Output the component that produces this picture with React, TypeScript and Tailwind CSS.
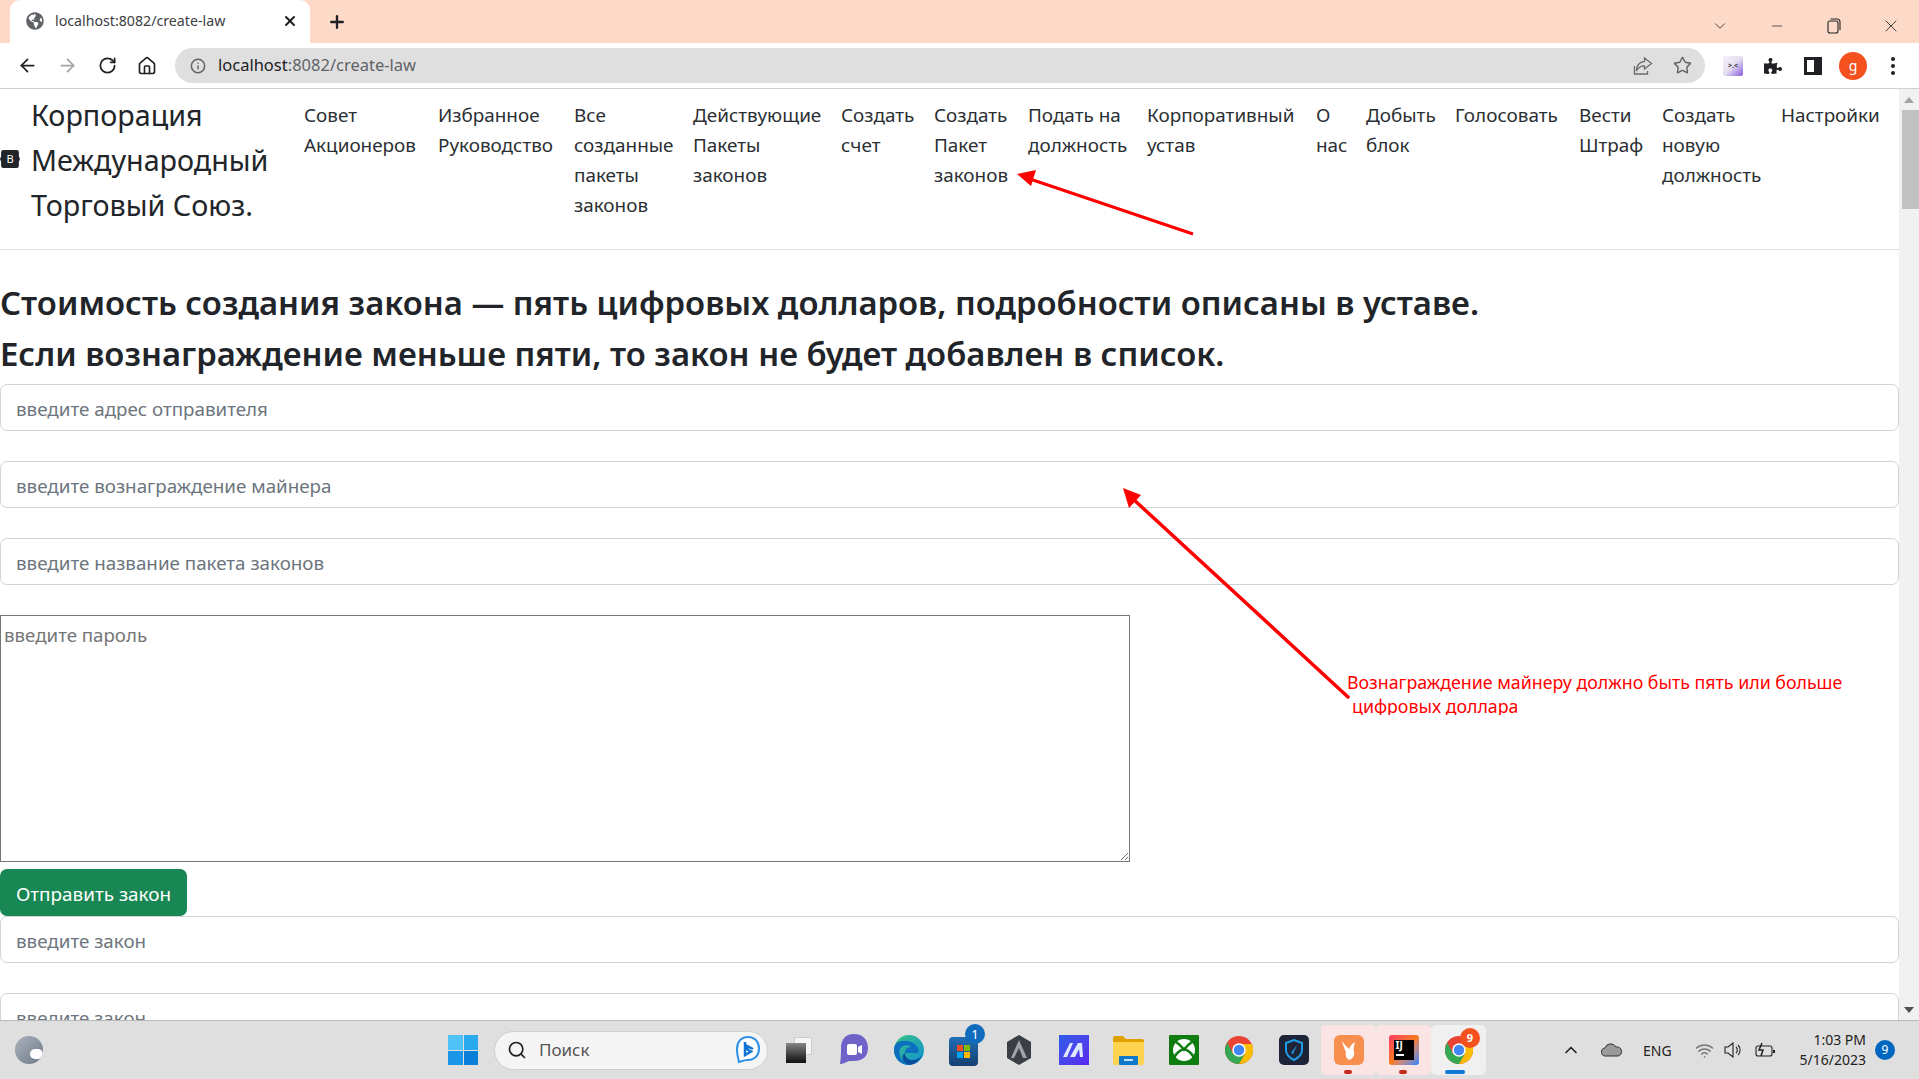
import React from "react";
import { ArrowLeft, ArrowRight, RotateCw, Home, Star, X, Plus, Minus, ChevronDown, ChevronUp, Search, Info, Wifi } from "lucide-react";
import { FaGlobeAmericas, FaPuzzlePiece } from "react-icons/fa";

const navItems: { w: string; lines: string[] }[] = [
  { w: "w-[134px]", lines: ["Совет", "Акционеров"] },
  { w: "w-[136px]", lines: ["Избранное", "Руководство"] },
  { w: "w-[119px]", lines: ["Все", "созданные", "пакеты", "законов"] },
  { w: "w-[148px]", lines: ["Действующие", "Пакеты", "законов"] },
  { w: "w-[93px]", lines: ["Создать", "счет"] },
  { w: "w-[94px]", lines: ["Создать", "Пакет", "законов"] },
  { w: "w-[119px]", lines: ["Подать на", "должность"] },
  { w: "w-[169px]", lines: ["Корпоративный", "устав"] },
  { w: "w-[50px]", lines: ["О", "нас"] },
  { w: "w-[89px]", lines: ["Добыть", "блок"] },
  { w: "w-[124px]", lines: ["Голосовать"] },
  { w: "w-[83px]", lines: ["Вести", "Штраф"] },
  { w: "w-[119px]", lines: ["Создать", "новую", "должность"] },
  { w: "w-[118px]", lines: ["Настройки"] },
];

function Slot({ children, w = "w-[40px]" }: { children: React.ReactNode; w?: string }) {
  return <div className={`${w} h-full flex items-center justify-center shrink-0`}>{children}</div>;
}

function TextInput({ placeholder, className = "" }: { placeholder: string; className?: string }) {
  return (
    <input
      placeholder={placeholder}
      className={`block w-full h-[47px] shrink-0 rounded-[7px] border border-[#ced4da] px-[15px] pt-[3px] text-[18.8px] bg-white placeholder:text-[#6c757d] outline-none ${className}`}
    />
  );
}

function Chrome({ size = 32 }: { size?: number }) {
  return (
    <svg width={size} height={size} viewBox="0 0 32 32">
      <circle cx="16" cy="16" r="15" fill="#ea4335" />
      <path d="M1 16 A15 15 0 0 0 16 31 L22.5 20 L9.5 20 L3.5 8 A15 15 0 0 0 1 16Z" fill="#34a853" />
      <path d="M16 9.5 L29.6 9.5 A15 15 0 0 1 16 31 L22.5 20 Z" fill="#fbbc04" />
      <circle cx="16" cy="16" r="7.2" fill="#fff" />
      <circle cx="16" cy="16" r="5.6" fill="#4285f4" />
    </svg>
  );
}

function TaskIcon({ children, bg = "" }: { children: React.ReactNode; bg?: string }) {
  return <div className={`w-[55px] h-[50px] shrink-0 flex items-center justify-center relative rounded-[5px] ${bg}`}>{children}</div>;
}

export default function App() {
  return (
    <div className="w-[1919px] h-[1079px] overflow-hidden flex flex-col bg-white relative font-['Noto_Sans',sans-serif] text-[#212529]">
      {/* Tab strip */}
      <div className="h-[43px] shrink-0 bg-[#fcdac7] flex items-end">
        <div className="ml-[10px] w-[300px] h-[43px] bg-white rounded-t-[10px] flex items-center pb-[1px] shrink-0">
          <FaGlobeAmericas className="ml-[16px] text-[#5f6368]" size={18} />
          <span className="ml-[11px] w-[227px] text-[14.2px] leading-none text-[#3c4043] whitespace-nowrap">localhost:8082/create-law</span>
          <X size={16} strokeWidth={3} className="text-[#202124]" />
        </div>
        <div className="h-[43px] flex items-center ml-[17px]">
          <Plus size={20} strokeWidth={2.8} className="text-[#202124]" />
        </div>
        <div className="flex-1" />
        <div className="h-[43px] flex items-start pt-[8px] text-[#333]">
          <Slot w="w-[57px] h-[20px]"><ChevronDown size={18} strokeWidth={1.2} /></Slot>
          <Slot w="w-[57px] h-[20px]"><Minus size={16} strokeWidth={1.2} /></Slot>
          <Slot w="w-[57px] h-[20px]">
            <svg width="14" height="16" viewBox="0 0 14 16" fill="none" stroke="#222" strokeWidth="1.1"><rect x="1" y="3" width="10" height="12" rx="2" /><path d="M3.5 1h6.5a3 3 0 0 1 3 3v8" /></svg>
          </Slot>
          <Slot w="w-[57px] h-[20px]"><X size={20} strokeWidth={1.1} /></Slot>
        </div>
      </div>

      {/* Toolbar */}
      <div className="h-[46px] shrink-0 bg-white border-b border-[#d0d0d0] flex items-center pl-[7px] pr-[6px]">
        <Slot><ArrowLeft size={21} strokeWidth={2} className="text-[#202124]" /></Slot>
        <Slot><ArrowRight size={21} strokeWidth={2} className="text-[#a5a5a5]" /></Slot>
        <Slot><RotateCw size={19} strokeWidth={2.2} className="text-[#202124]" /></Slot>
        <Slot><Home size={20} strokeWidth={2} className="text-[#202124]" /></Slot>
        <div className="ml-[8px] flex-1 h-[35px] rounded-full bg-[#dfdfdf] flex items-center">
          <Info size={16} strokeWidth={2.2} className="ml-[15px] text-[#5f6368]" />
          <span className="ml-[12px] text-[16.5px] leading-none whitespace-nowrap text-[#5f6368]"><span className="text-[#202124]">localhost</span>:8082/create-law</span>
          <div className="flex-1" />
          <svg width="20" height="20" viewBox="0 0 20 20" fill="none" stroke="#6b6b6b" strokeWidth="1.3" className="mr-[20px]"><path d="M1.5 10v8h13v-3" /><path d="M11.5 2l7 5.5-7 5.5V9.8C7.5 9.8 5 11.5 3.5 15c0-6 3.5-9 8-9.6z" /></svg>
          <Star size={19} strokeWidth={1.8} className="text-[#5f6368] mr-[13px]" />
        </div>
        <div className="w-[8px] shrink-0" />
        <Slot>
          <div className="w-[20px] h-[20px] rounded-[2px] bg-gradient-to-br from-[#f4f0f8] via-[#e6def2] to-[#8a55d8] flex items-center justify-center text-[7px] leading-none text-[#222] font-bold">{">.<"}</div>
        </Slot>
        <Slot><FaPuzzlePiece size={18} className="text-[#202124]" /></Slot>
        <Slot>
          <div className="w-[18px] h-[18px] border-[3px] border-r-[8px] border-[#202124]" />
        </Slot>
        <Slot>
          <div className="w-[28px] h-[28px] rounded-full bg-[#f4511e] text-white text-[14px] flex items-center justify-center">g</div>
        </Slot>
        <Slot>
          <div className="flex flex-col gap-[3px]">
            <div className="w-[4px] h-[4px] rounded-full bg-[#202124]" />
            <div className="w-[4px] h-[4px] rounded-full bg-[#202124]" />
            <div className="w-[4px] h-[4px] rounded-full bg-[#202124]" />
          </div>
        </Slot>
      </div>

      {/* Page */}
      <div className="flex-1 min-h-0 flex overflow-hidden relative">
        <div className="flex-1 min-w-0 overflow-hidden flex flex-col">
          <nav className="h-[161px] shrink-0 border-b border-[#dfdfdf] flex items-start">
            <svg width="20" height="18" viewBox="0 0 18 16" className="mt-[61px] shrink-0">
              <path d="M3 0h12a2 2 0 0 1 2 2v3.5l1 2.500-1 2.500V14a2 2 0 0 1-2 2H3a2 2 0 0 1-2-2v-3.500L0 8l1-2.500V2a2 2 0 0 1 2-2z" fill="#212529" />
              <text x="9" y="12" textAnchor="middle" fontSize="10" fill="#fff" fontFamily="Noto Sans, sans-serif">B</text>
            </svg>
            <div className="ml-[11px] w-[273px] shrink-0 pt-[3px] text-[28.7px] leading-[45px] text-[#212529]">
              Корпорация<br />Международный<br />Торговый Союз.
            </div>
            <ul className="flex items-start pt-[11px] text-[18.9px] leading-[30px] text-[#2b2f33]">
              {navItems.map((it, i) => (
                <li key={i} className={`${it.w} shrink-0 whitespace-nowrap`}>
                  {it.lines.map((l, j) => (
                    <div key={j}>{l}</div>
                  ))}
                </li>
              ))}
            </ul>
          </nav>

          <h3 className="mt-[27px] text-[32.85px] leading-[51px] font-semibold text-[#212529] whitespace-nowrap">
            Стоимость создания закона — пять цифровых долларов, подробности описаны в уставе.
            <br />
            Если вознаграждение меньше пяти, то закон не будет добавлен в список.
          </h3>

          <div className="mt-[5px] flex flex-col">
            <TextInput placeholder="введите адрес отправителя" />
            <TextInput placeholder="введите вознаграждение майнера" className="mt-[30px]" />
            <TextInput placeholder="введите название пакета законов" className="mt-[30px]" />
            <textarea
              placeholder="введите пароль"
              className="block mt-[30px] w-[1130px] h-[247px] shrink-0 border border-[#767676] px-[3px] py-[7px] text-[18.7px] leading-[24px] placeholder:text-[#757575] outline-none resize"
            />
            <button className="mt-[7px] w-[187px] h-[47px] shrink-0 rounded-[7px] bg-[#198754] pt-[3px] text-white text-[18.9px] text-center">
              Отправить закон
            </button>
            <TextInput placeholder="введите закон" />
            <TextInput placeholder="введите закон" className="mt-[30px]" />
          </div>
        </div>

        {/* Scrollbar */}
        <div className="w-[20px] shrink-0 bg-[#f1f1f1] flex flex-col items-end">
          <div className="h-[21px] w-full flex items-center justify-center">
            <div className="w-0 h-0 border-l-[5px] border-r-[5px] border-b-[6px] border-l-transparent border-r-transparent border-b-[#a3a3a3]" />
          </div>
          <div className="w-[17px] h-[99px] bg-[#c1c1c1]" />
          <div className="flex-1" />
          <div className="h-[21px] w-full flex items-center justify-center">
            <div className="w-0 h-0 border-l-[5px] border-r-[5px] border-t-[6px] border-l-transparent border-r-transparent border-t-[#505050]" />
          </div>
        </div>

        {/* Annotations drawn over the page */}
        <svg className="absolute left-0 top-0 pointer-events-none" width="1919" height="931" viewBox="0 89 1919 931">
          <path d="M1193 234 L1030 179" stroke="#ff0000" strokeWidth="3" />
          <path d="M1017 174 L1036 170 L1031 186 Z" fill="#ff0000" />
          <path d="M1348 697 L1132 498" stroke="#ff0000" strokeWidth="3.5" strokeLinecap="round" />
          <path d="M1123 488 L1141 495 L1129 508 Z" fill="#ff0000" />
        </svg>
        <div className="absolute left-[1347px] top-[581px] h-[45px] overflow-hidden text-[17.8px] leading-[24px] text-[#ff0000] whitespace-nowrap">
          Вознаграждение майнеру должно быть пять или больше
          <br />
          <span className="ml-[5px]">цифровых доллара</span>
        </div>
      </div>

      {/* Taskbar */}
      <div className="h-[59px] shrink-0 bg-[#dfdfdf] border-t border-[#b9b9b9] flex items-center relative">
        <div className="ml-[15px] w-[28px] h-[28px] shrink-0 rounded-full bg-gradient-to-br from-[#aab2bd] to-[#6f7a87] relative overflow-hidden">
          <div className="absolute right-[0px] bottom-[5px] w-[13px] h-[10px] rounded-full bg-white" />
        </div>
        <div className="ml-[405px] w-[30px] h-[30px] shrink-0 grid grid-cols-2 gap-[1px]">
          <div className="bg-[#4fc3f7]" />
          <div className="bg-[#29a9ee]" />
          <div className="bg-[#1a95e8]" />
          <div className="bg-[#0a7fd9]" />
        </div>
        <div className="ml-[16px] w-[274px] h-[39px] shrink-0 rounded-full bg-[#f5f5f5] border border-[#cfcfcf] flex items-center">
          <Search size={20} strokeWidth={2} className="ml-[12px] text-[#222]" />
          <span className="ml-[12px] text-[17px] text-[#555]">Поиск</span>
          <div className="flex-1" />
          <svg width="26" height="30" viewBox="0 0 26 30" className="mr-[6px]" fill="none">
            <path d="M13 2C6 2 2 7 2 14c0 5 1 9 2 13 3-1 5-2 9-2 7 0 11-5 11-11.500S20 2 13 2z" stroke="#2b8fe8" strokeWidth="2" fill="#fff" />
            <path d="M10 7v13l6-3.500-3.500-2L12 11l6 3" stroke="#1272d6" strokeWidth="2.500" />
          </svg>
        </div>
        <div className="ml-[3px] w-[55px] flex items-center justify-center shrink-0">
          <div className="w-[26px] h-[26px] relative">
            <div className="absolute left-[8px] top-0 w-[18px] h-[18px] bg-[#f5f5f5] border border-[#ccc]" />
            <div className="absolute left-0 top-[6px] w-[20px] h-[20px] bg-gradient-to-b from-[#888] to-[#111]" />
          </div>
        </div>
        <TaskIcon>
          <svg width="30" height="34" viewBox="0 0 30 34"><path d="M15 1C6 1 2 7 2 15c0 4 0 9-1 16 3 0 6-2 9-3h5c9 0 14-5 14-13S24 1 15 1z" fill="#6f63c9" /><rect x="8" y="11" width="10" height="11" rx="2" fill="#fff" /><path d="M19 14l4-2v9l-4-2z" fill="#fff" /></svg>
        </TaskIcon>
        <TaskIcon>
          <svg width="32" height="32" viewBox="0 0 32 32">
            <defs>
              <linearGradient id="e1" x1="0" y1="0" x2="1" y2="1"><stop offset="0" stopColor="#39c481" /><stop offset="1" stopColor="#0f8fd8" /></linearGradient>
            </defs>
            <circle cx="16" cy="16" r="15" fill="url(#e1)" />
            <path d="M1 16C1 8 8 6 14 7c8 1 13 7 11 12H12c0-4 3-6 6-6-4-3-9-2-11 2-2 5 1 13 9 16C7 31 1 24 1 16z" fill="#0c6fc0" />
            <path d="M12 19c0 5 5 9 12 6 2-1 4-2 5-4-2 6-8 10-13 10-6-2-9-9-4-12z" fill="#0a4f9e" />
          </svg>
        </TaskIcon>
        <TaskIcon>
          <div className="w-[29px] h-[29px] mt-[2px] rounded-[4px] bg-gradient-to-b from-[#1f6fb5] to-[#153f70] grid grid-cols-2 gap-[1px] p-[8px]">
            <div className="bg-[#f25022]" />
            <div className="bg-[#7fba00]" />
            <div className="bg-[#00a4ef]" />
            <div className="bg-[#ffb900]" />
          </div>
          <div className="absolute right-[6px] top-[-1px] w-[20px] h-[20px] rounded-full bg-[#0f6cbd] text-white text-[13px] leading-[20px] text-center">1</div>
        </TaskIcon>
        <TaskIcon>
          <svg width="28" height="32" viewBox="0 0 28 32"><path d="M14 1l12 7v16l-12 7-12-7V8z" fill="#3a3f45" /><path d="M14 6l8 18H6z" fill="#a0a4a8" /><path d="M14 14l4 10H9z" fill="#3a3f45" /></svg>
        </TaskIcon>
        <TaskIcon>
          <div className="w-[30px] h-[30px] bg-gradient-to-br from-[#2b5de8] to-[#5a22f0] flex items-center justify-center">
            <svg width="22" height="16" viewBox="0 0 22 16"><path d="M0 15L7 1h3L4 15zM7 15L15 1h4l1 14h-3l-1-8-4 8z" fill="#dfe8ff" /></svg>
          </div>
        </TaskIcon>
        <TaskIcon>
          <svg width="31" height="30" viewBox="0 0 31 30"><path d="M0 3a2 2 0 0 1 2-2h8l3 3h16a2 2 0 0 1 2 2v4H0z" fill="#e0a100" /><path d="M0 7h31v21a2 2 0 0 1-2 2H2a2 2 0 0 1-2-2z" fill="#ffd34f" /><rect x="6" y="21" width="19" height="9" rx="1" fill="#0f78c9" /><rect x="11" y="24" width="9" height="2" fill="#bfe0f8" /></svg>
        </TaskIcon>
        <TaskIcon>
          <div className="w-[30px] h-[30px] rounded-[1px] bg-[#107c10] flex items-center justify-center">
            <svg width="24" height="24" viewBox="0 0 24 24" fill="none">
              <circle cx="12" cy="12" r="11" fill="#fff" />
              <path d="M3.500 3.500C7 6 10 9 12 11.500 14 9 17 6 20.500 3.500" stroke="#107c10" strokeWidth="2.500" />
              <path d="M2.500 18.500C5 15 9 11 12 11.500 15 11 19 15 21.500 18.500" stroke="#107c10" strokeWidth="2.500" />
            </svg>
          </div>
        </TaskIcon>
        <TaskIcon><Chrome size={30} /></TaskIcon>
        <TaskIcon>
          <div className="w-[30px] h-[30px] rounded-[5px] bg-[#1d2438] flex items-center justify-center">
            <svg width="20" height="22" viewBox="0 0 20 22" fill="none"><path d="M10 1l8 3v7c0 5-4 8-8 10-4-2-8-5-8-10V4z" stroke="#1f9be8" strokeWidth="2" /><path d="M13 6l-6 8 2 1z" fill="#1f9be8" /></svg>
          </div>
        </TaskIcon>
        <TaskIcon bg="bg-[#fbe4e4]">
          <div className="w-[30px] h-[30px] rounded-[6px] bg-[#f98f4f] flex items-center justify-center">
            <svg width="18" height="22" viewBox="0 0 18 22"><path d="M2 2c2 3 5 6 7 8 1-3 3-5 6-7-1 4-2 7-1 10 1 3-1 7-5 8-3-2-4-5-3-8C4 9 3 6 2 2z" fill="#fff" /></svg>
          </div>
          <div className="absolute bottom-[1px] left-[23px] w-[8px] h-[4px] rounded-full bg-[#c42b1c]" />
        </TaskIcon>
        <TaskIcon bg="bg-[#fbe4e4]">
          <div className="w-[30px] h-[30px] relative">
            <div className="absolute inset-0 bg-gradient-to-br from-[#fe315d] via-[#f97a12] to-[#087cfa] rounded-[3px]" />
            <div className="absolute left-[5px] top-[5px] w-[20px] h-[20px] bg-black text-white text-[10px] font-bold leading-[11px] px-[2px]">IJ<div className="mt-[3px] w-[8px] h-[1.5px] bg-white" /></div>
          </div>
          <div className="absolute bottom-[1px] left-[23px] w-[8px] h-[4px] rounded-full bg-[#c42b1c]" />
        </TaskIcon>
        <TaskIcon bg="bg-[#f0f0f0]">
          <Chrome size={30} />
          <div className="absolute right-[6px] top-[3px] w-[20px] h-[20px] rounded-full bg-[#f4511e] text-white text-[11px] leading-[20px] text-center font-bold">9</div>
          <div className="absolute bottom-[1px] left-[14px] w-[20px] h-[4px] rounded-full bg-[#0f78d4]" />
        </TaskIcon>

        <div className="flex-1" />
        <ChevronUp size={20} strokeWidth={2} className="text-[#222] shrink-0" />
        <svg width="22" height="14" viewBox="0 0 22 14" className="ml-[20px] shrink-0"><path d="M5 13a4 4 0 0 1-1-8 6 6 0 0 1 11-1 4.500 4.500 0 0 1 2 9z" fill="#9a9a9a" stroke="#333" strokeWidth="1" /></svg>
        <span className="ml-[20px] w-[30px] text-[14px] text-[#222] shrink-0">ENG</span>
        <Wifi size={19} strokeWidth={2} className="ml-[22px] text-[#777] shrink-0" />
        <svg width="20" height="16" viewBox="0 0 20 16" fill="none" stroke="#222" strokeWidth="1.1" className="ml-[10px] shrink-0"><path d="M1 5h3l5-4v14l-5-4H1z" /><path d="M12 5a4 4 0 0 1 0 6M14 3a7 7 0 0 1 0 10" /></svg>
        <svg width="21" height="16" viewBox="0 0 21 16" fill="none" stroke="#222" strokeWidth="1.1" className="ml-[11px] shrink-0"><rect x="1" y="4" width="16" height="10" rx="2" /><path d="M19 8v3" strokeWidth="2" /><path d="M7 1L4 8h4l-2 6" strokeWidth="1.500" /></svg>
        <div className="ml-[10px] w-[80px] text-right text-[14px] leading-[20px] text-[#222] shrink-0 whitespace-nowrap">
          1:03 PM<br />5/16/2023
        </div>
        <div className="ml-[9px] mr-[24px] w-[20px] h-[20px] shrink-0 rounded-full bg-[#0067c0] text-white text-[12px] leading-[20px] text-center">9</div>
      </div>
    </div>
  );
}
